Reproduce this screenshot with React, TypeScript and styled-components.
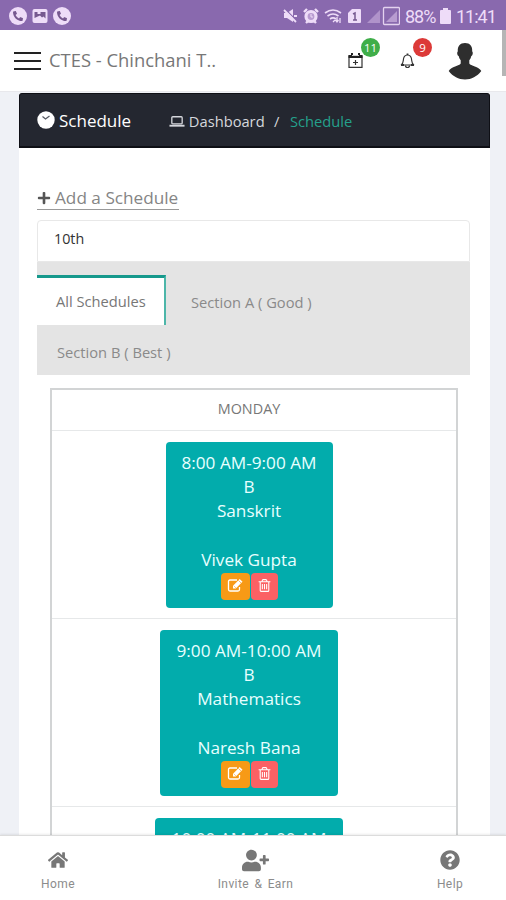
import React from "react";
import styled, { createGlobalStyle } from "styled-components";
import { FaHome, FaUserPlus, FaQuestionCircle, FaPlus, FaPhoneAlt } from "react-icons/fa";

const Global = createGlobalStyle`
  * { box-sizing: border-box; }
  body { margin: 0; background: #fff; font-family: "Open Sans", "Noto Sans", sans-serif; }
`;

const Screen = styled.div`
  width: 506px;
  height: 900px;
  overflow: hidden;
  display: flex;
  flex-direction: column;
  background: #fff;
`;

const StatusBar = styled.div`
  height: 30px;
  flex: none;
  background: #8969ae;
  color: #eedcf8;
  display: flex;
  align-items: center;
  justify-content: space-between;
  padding: 2px 11px 0 9px;
  font: 18px Roboto, sans-serif;
`;

const StatusGroup = styled.div<{ $gap: number }>`
  display: flex;
  align-items: center;
  gap: ${(p) => p.$gap}px;
`;

const PhoneDot = styled.span`
  width: 18px;
  height: 18px;
  border-radius: 50%;
  background: #eedcf8;
  color: #76588f;
  display: flex;
  align-items: center;
  justify-content: center;
`;

const StatusText = styled.span<{ $width: number }>`
  width: ${(p) => p.$width}px;
  white-space: nowrap;
  letter-spacing: -1px;
`;

const Header = styled.header`
  height: 62px;
  flex: none;
  display: flex;
  align-items: center;
  padding-left: 14px;
  position: relative;
  border-bottom: 1px solid #e8e8ec;
`;

const Burger = styled.div`
  width: 27px;
  height: 18px;
  display: flex;
  flex-direction: column;
  justify-content: space-between;
`;

const BurgerLine = styled.span`
  height: 2px;
  background: #222;
`;

const AppTitle = styled.h1`
  margin: -2px 0 0 8px;
  width: 299px;
  font-size: 18.4px;
  font-weight: 400;
  color: #777;
`;

const HeaderAction = styled.div<{ $width: number }>`
  width: ${(p) => p.$width}px;
  height: 100%;
  padding-top: 22px;
  flex: none;
  position: relative;
  line-height: 0;
`;

const Badge = styled.span<{ $color: string; $left: number }>`
  position: absolute;
  left: ${(p) => p.$left}px;
  top: 8px;
  width: 19px;
  height: 19px;
  border-radius: 50%;
  background: ${(p) => p.$color};
  color: #fff;
  font-size: 11.5px;
  line-height: 19px;
  text-align: center;
`;

const ScrollThumb = styled.span`
  position: absolute;
  right: 0;
  top: 0;
  width: 4px;
  height: 46px;
  background: #b5b5b5;
`;

const Viewport = styled.main`
  flex: 1;
  min-height: 0;
  overflow: hidden;
  background: #eff1f6;
  padding: 1px 16px 0 19px;
`;

const Panel = styled.section`
  width: 471px;
  height: 800px;
  background: #fff;
`;

const TitleBar = styled.div`
  height: 55px;
  background: #242730;
  border: 1px solid #0e0f15;
  border-bottom-width: 2px;
  border-radius: 3px 3px 0 0;
  display: flex;
  align-items: center;
  padding: 1px 0 0 17px;
  color: #fff;
`;

const PageTitle = styled.h2`
  margin: 0 0 0 4px;
  width: 110px;
  font-size: 17px;
  font-weight: 400;
`;

const Crumb = styled.span<{ $active?: boolean; $width: number }>`
  width: ${(p) => p.$width}px;
  font-size: 14.7px;
  white-space: nowrap;
  color: ${(p) => (p.$active ? "#25a08c" : "#d5d7dc")};
`;

const Content = styled.div`
  padding: 38px 20px 0 18px;
`;

const AddLink = styled.a`
  display: flex;
  align-items: center;
  gap: 4px;
  width: 142px;
  height: 24px;
  border-bottom: 1px solid #999;
  color: #858585;
  font-size: 17.2px;
  white-space: nowrap;
  svg { color: #555; flex: none; }
`;

const Select = styled.div`
  margin-top: 10px;
  height: 42px;
  border: 1px solid #e8e8e8;
  border-radius: 4px 4px 0 0;
  padding: 8px 16px;
  font-size: 14.3px;
  line-height: 20px;
  color: #333;
`;

const Tabs = styled.div`
  height: 113px;
  background: #e4e4e4;
  padding: 13px 20px 0 0;
  display: flex;
  flex-wrap: wrap;
  align-content: flex-start;
`;

const Tab = styled.div<{ $active?: boolean }>`
  height: 50px;
  padding: ${(p) => (p.$active ? "0 0 0 19px" : "4px 20px 0")};
  width: ${(p) => (p.$active ? "129px" : "auto")};
  line-height: 47px;
  font-size: 14.7px;
  white-space: nowrap;
  color: ${(p) => (p.$active ? "#777" : "#8a8a8a")};
  background: ${(p) => (p.$active ? "#fff" : "transparent")};
  border-top: ${(p) => (p.$active ? "3px solid #16998c" : "0")};
  border-right: ${(p) => (p.$active ? "2px solid #4db6a9" : "0")};
  margin-right: ${(p) => (p.$active ? 5 : 30)}px;
`;

const Table = styled.div`
  margin: 13px 12px 0 13px;
  border: 2px solid #d2d4d5;
`;

const DayCell = styled.div`
  height: 40px;
  line-height: 38px;
  font-size: 14.4px;
  text-align: center;
  color: #777;
  padding-right: 10px;
`;

const SlotRow = styled.div`
  height: 188px;
  border-top: 1px solid #e6e8e9;
  padding: 11px 10px 0 0;
  display: flex;
  justify-content: center;
  align-items: flex-start;
`;

const SlotCard = styled.article<{ $width: number }>`
  width: ${(p) => p.$width}px;
  height: 166px;
  border-radius: 4px;
  background: #02acac;
  color: #e8ffff;
  padding-top: 8.5px;
  display: flex;
  flex-direction: column;
  align-items: center;
`;

const SlotLine = styled.div`
  height: 24.3px;
  line-height: 24.3px;
  font-size: 17.2px;
  white-space: nowrap;
`;

const Actions = styled.div`
  margin-top: 1px;
  display: flex;
  gap: 1px;
`;

const ActionButton = styled.button<{ $color: string; $width: number }>`
  width: ${(p) => p.$width}px;
  height: 27px;
  padding: 0 0 2px;
  border: 0;
  border-radius: 4px;
  background: ${(p) => p.$color};
  color: #fff;
  display: flex;
  align-items: center;
  justify-content: center;
`;

const BottomNav = styled.nav`
  height: 65px;
  flex: none;
  background: #fff;
  border-top: 1px solid #dcdcdc;
  box-shadow: 0 -1px 2px rgba(0, 0, 0, 0.08);
  position: relative;
  display: flex;
  justify-content: space-between;
  padding: 0 39px 0 38px;
`;

const NavItem = styled.div<{ $width: number }>`
  width: ${(p) => p.$width}px;
  display: flex;
  flex-direction: column;
  align-items: center;
  color: #777;
`;

const NavIcon = styled.span`
  height: 40px;
  padding-top: 8px;
  display: flex;
  align-items: center;
`;

const NavLabel = styled.span`
  font: 12px/16px Roboto, sans-serif;
  letter-spacing: 0.4px;
  word-spacing: 2px;
  white-space: nowrap;
  color: #8c8c8c;
`;

const PictureIcon = () => (
  <svg width="16" height="16" viewBox="0 0 16 16">
    <rect x="0.5" y="1" width="15" height="14" rx="2" fill="#eedcf8" />
    <path d="M2.500 4h3v2h3V4h5v6.500l-2-2-1.500 1-2-2L2.500 10z" fill="#76588f" />
  </svg>
);

const MuteIcon = () => (
  <svg width="15" height="16" viewBox="0 0 15 16">
    <path d="M1 5h3l6-4v13l-6-4H1z" fill="#eedcf8" />
    <path d="M2 1l12 12" stroke="#8969ae" strokeWidth="1.2" />
    <path d="M1 2l12 12M11 8h3" stroke="#eedcf8" strokeWidth="1.8" />
  </svg>
);

const AlarmIcon = () => (
  <svg width="16" height="16" viewBox="0 0 16 16" fill="none" stroke="#eedcf8">
    <circle cx="8" cy="8.5" r="5" fill="#b89bd0" strokeWidth="3.2" />
    <path d="M1 4l3-3M15 4l-3-3M3 15l2-2M13 15l-2-2" strokeWidth="2.4" />
    <path d="M8 6v3h2" />
  </svg>
);

const WifiStatusIcon = () => (
  <svg width="19" height="16" viewBox="0 0 19 16" fill="none" stroke="#eedcf8" strokeWidth="1.6">
    <path d="M1 5q8-6 16 0M3.5 8q5.500-4 11 0M6 11q3-2.200 6 0" />
    <path d="M9 14l2-2M13 9v5M11.500 12l1.500 2 1.500-2M16 15v-5" strokeWidth="1.3" />
  </svg>
);

const SimIcon = () => (
  <svg width="13" height="16" viewBox="0 0 13 16">
    <path d="M4 1h8a1 1 0 011 1v12a1 1 0 01-1 1H1a1 1 0 01-1-1V5z" fill="#eedcf8" />
    <path d="M5 6l2-1v7M5 12h4" fill="none" stroke="#76588f" strokeWidth="1.5" />
  </svg>
);

const SignalIcons = () => (
  <svg width="34" height="20" viewBox="0 0 34 20">
    <path d="M1 17L14 4v13z" fill="#b093ca" />
    <rect x="17.500" y="1.500" width="16" height="17" rx="1" fill="none" stroke="#e4d2ef" strokeWidth="1.3" />
    <path d="M20 16L31 5v11z" fill="#b89cd0" />
  </svg>
);

const BatteryIcon = () => (
  <svg width="11" height="16" viewBox="0 0 11 16">
    <path d="M3 0h5v2h2q1 0 1 1v12q0 1-1 1H1q-1 0-1-1V3q0-1 1-1h2z" fill="#eedcf8" />
  </svg>
);

const CalendarPlusIcon = () => (
  <svg width="15" height="17" viewBox="0 0 15 17">
    <path d="M1 4h13v11.300H1z" fill="none" stroke="#333" strokeWidth="1.200" />
    <path d="M0.500 3h14v3h-14z" fill="#222" />
    <path d="M4 1v3M11 1v3" stroke="#222" strokeWidth="2" />
    <path d="M4 3.500h7" stroke="#fff" strokeWidth="0.800" />
    <path d="M7.500 8v5M5 10.500h5" stroke="#333" strokeWidth="1.200" />
  </svg>
);

const BellIcon = () => (
  <svg width="15" height="17" viewBox="0 0 15 17" fill="none" stroke="#333" strokeWidth="1.200">
    <path d="M1 13q2-1 2.300-4.500Q3.500 3 7.500 3t4.200 5.500q.3 3.500 2.300 4.500z" />
    <path d="M7.500 3V1.500" strokeWidth="1.800" />
    <path d="M5.500 13.500q0 2 2 2t2-2" />
    <path d="M1 13h3M11 13h3" strokeWidth="2.200" />
  </svg>
);

const Avatar = () => (
  <svg width="34" height="38" viewBox="0 0 34 38">
    <path
      d="M17 1c5 0 7.500 3 7.200 8.500 1 .6.700 4-.9 4.600-.5 2.400-1.300 3.500-2 4.200v3.200c1.300 2.700 9.500 2.600 12 7.500C29 34.500 23.500 37.500 17 37.500S5 34.500.7 29c2.500-4.900 10.700-4.800 12-7.500v-3.200c-.7-.7-1.500-1.800-2-4.200-1.600-.6-1.900-4-.9-4.600C9.500 4 12 1 17 1z"
      fill="#2e2e2e"
    />
  </svg>
);

const ClockIcon = () => (
  <svg width="18" height="20" viewBox="0 0 18 20">
    <circle cx="9" cy="9" r="8.700" fill="#fff" />
    <path d="M5.500 5.500l3 2.500 4-3" fill="none" stroke="#555963" strokeWidth="1.200" />
  </svg>
);

const LaptopIcon = () => (
  <svg width="16" height="14" viewBox="0 0 17 14" fill="none" stroke="#d5d7dc">
    <rect x="3" y="2.500" width="11" height="7.500" rx="1" strokeWidth="1.400" />
    <path d="M0.500 12h16" strokeWidth="2" />
  </svg>
);

const EditIcon = () => (
  <svg width="17" height="15" viewBox="0 0 17 15" fill="none" stroke="#fff">
    <path d="M10 2H3Q1.500 2 1.500 3.500v8Q1.500 13 3 13h8q1.500 0 1.500-1.500V9" strokeWidth="1.300" />
    <path d="M6 10.500V7.700L12.700 1l2.800 2.800-6.700 6.700z" fill="#fff" stroke="none" />
    <path d="M7.500 8.500l1 1" stroke="#f79a16" />
    <path d="M11.400 2.300l2.800 2.800" stroke="#f79a16" strokeWidth="0.700" />
  </svg>
);

const TrashIcon = () => (
  <svg width="15" height="15" viewBox="0 0 1792 1792" fill="#fff">
    <path d="M704 736v576q0 14-9 23t-23 9h-64q-14 0-23-9t-9-23v-576q0-14 9-23t23-9h64q14 0 23 9t9 23zm256 0v576q0 14-9 23t-23 9h-64q-14 0-23-9t-9-23v-576q0-14 9-23t23-9h64q14 0 23 9t9 23zm256 0v576q0 14-9 23t-23 9h-64q-14 0-23-9t-9-23v-576q0-14 9-23t23-9h64q14 0 23 9t9 23zm128 724v-948h-896v948q0 22 7 40.500t14.500 27 10.500 8.500h832q3 0 10.500-8.500t14.500-27 7-40.500zm-672-1076h448l-48-117q-7-9-17-11h-317q-10 2-17 11zm928 32v64q0 14-9 23t-23 9h-96v948q0 83-47 143.500t-113 60.500h-832q-66 0-113-58.500t-47-141.500v-952h-96q-14 0-23-9t-9-23v-64q0-14 9-23t23-9h309l70-167q15-37 54-63t79-26h320q40 0 79 26t54 63l70 167h309q14 0 23 9t9 23z" />
  </svg>
);

const slots = [
  { time: "8:00 AM-9:00 AM", section: "B", subject: "Sanskrit", teacher: "Vivek Gupta", width: 167 },
  { time: "9:00 AM-10:00 AM", section: "B", subject: "Mathematics", teacher: "Naresh Bana", width: 178 },
  { time: "10:00 AM-11:00 AM", section: "", subject: "", teacher: "", width: 188 },
];

export default function App() {
  return (
    <Screen>
      <Global />
      <StatusBar>
        <StatusGroup $gap={5}>
          <PhoneDot><FaPhoneAlt size={10} /></PhoneDot>
          <PictureIcon />
          <PhoneDot><FaPhoneAlt size={10} /></PhoneDot>
        </StatusGroup>
        <StatusGroup $gap={5}>
          <MuteIcon />
          <AlarmIcon />
          <WifiStatusIcon />
          <SimIcon />
          <SignalIcons />
          <StatusText $width={30}>88%</StatusText>
          <BatteryIcon />
          <StatusText $width={39}>11:41</StatusText>
        </StatusGroup>
      </StatusBar>

      <Header>
        <Burger><BurgerLine /><BurgerLine /><BurgerLine /></Burger>
        <AppTitle>CTES - Chinchani T..</AppTitle>
        <HeaderAction $width={52}>
          <CalendarPlusIcon />
          <Badge $color="#3fae49" $left={13}>11</Badge>
        </HeaderAction>
        <HeaderAction $width={48}>
          <BellIcon />
          <Badge $color="#dc3a38" $left={13}>9</Badge>
        </HeaderAction>
        <Avatar />
        <ScrollThumb />
      </Header>

      <Viewport>
        <Panel>
          <TitleBar>
            <ClockIcon />
            <PageTitle>Schedule</PageTitle>
            <LaptopIcon />
            <Crumb $width={89}>&nbsp;Dashboard</Crumb>
            <Crumb $width={16}>/</Crumb>
            <Crumb $width={70} $active>Schedule</Crumb>
          </TitleBar>
          <Content>
            <AddLink><FaPlus size={14} />Add a Schedule</AddLink>
            <Select>10th</Select>
            <Tabs>
              <Tab $active>All Schedules</Tab>
              <Tab>Section A ( Good )</Tab>
              <Tab>Section B ( Best )</Tab>
            </Tabs>
            <Table>
              <DayCell>MONDAY</DayCell>
              {slots.map((s) => (
                <SlotRow key={s.time}>
                  <SlotCard $width={s.width}>
                    <SlotLine>{s.time}</SlotLine>
                    <SlotLine>{s.section}</SlotLine>
                    <SlotLine>{s.subject}</SlotLine>
                    <SlotLine />
                    <SlotLine>{s.teacher}</SlotLine>
                    <Actions>
                      <ActionButton $color="#f79a16" $width={29}><EditIcon /></ActionButton>
                      <ActionButton $color="#fb6164" $width={27}><TrashIcon /></ActionButton>
                    </Actions>
                  </SlotCard>
                </SlotRow>
              ))}
            </Table>
          </Content>
        </Panel>
      </Viewport>

      <BottomNav>
        <NavItem $width={40}>
          <NavIcon><FaHome size={20} /></NavIcon>
          <NavLabel>Home</NavLabel>
        </NavItem>
        <NavItem $width={76}>
          <NavIcon><FaUserPlus size={27} /></NavIcon>
          <NavLabel>Invite &amp; Earn</NavLabel>
        </NavItem>
        <NavItem $width={34}>
          <NavIcon><FaQuestionCircle size={20} /></NavIcon>
          <NavLabel>Help</NavLabel>
        </NavItem>
      </BottomNav>
    </Screen>
  );
}
